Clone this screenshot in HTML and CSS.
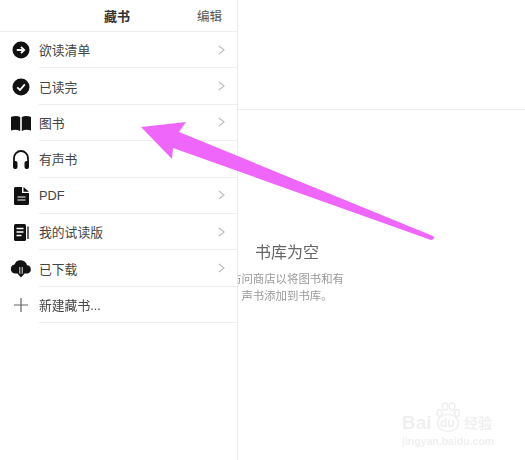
FILE: index.html
```html
<!DOCTYPE html>
<html>
<head>
  <meta charset="UTF-8">
  <title>藏书</title>
  <link rel="stylesheet" href="styles.css">
</head>
<body>
  <div class="app">
    <div class="sidebar">
      <div class="header">
        <h1>藏书</h1>
        <span class="edit">编辑</span>
      </div>
      <div class="row">
        <div class="row-icon">
          <svg width="18" height="18" viewBox="0 0 18 18"><circle cx="9" cy="9" r="8.5" fill="#111"/><path d="M4.8 9h7M9 5.8 12.2 9 9 12.2" fill="none" stroke="#fff" stroke-width="1.8"/></svg>
        </div>
        <div class="row-body"><span>欲读清单</span><svg class="chevron" width="7" height="10" viewBox="0 0 7 10"><path d="M1 1l5 4-5 4" fill="none" stroke="#bbb" stroke-width="1.1"/></svg></div>
      </div>
      <div class="row">
        <div class="row-icon">
          <svg width="18" height="18" viewBox="0 0 18 18"><circle cx="9" cy="9" r="8.5" fill="#111"/><path d="M5.2 9.3 8 12l4.8-5.6" fill="none" stroke="#fff" stroke-width="1.8"/></svg>
        </div>
        <div class="row-body"><span>已读完</span><svg class="chevron" width="7" height="10" viewBox="0 0 7 10"><path d="M1 1l5 4-5 4" fill="none" stroke="#bbb" stroke-width="1.1"/></svg></div>
      </div>
      <div class="row">
        <div class="row-icon">
          <svg width="20" height="16" viewBox="0 0 20 16"><path d="M0 2Q5 0 9.2 2V16Q5 14 0 15.5ZM10.8 2Q15 0 20 2V15.5Q15 14 10.8 16Z" fill="#111"/></svg>
        </div>
        <div class="row-body"><span>图书</span><svg class="chevron" width="7" height="10" viewBox="0 0 7 10"><path d="M1 1l5 4-5 4" fill="none" stroke="#bbb" stroke-width="1.1"/></svg></div>
      </div>
      <div class="row">
        <div class="row-icon">
          <svg width="18" height="20" viewBox="0 0 18 20"><path d="M2 14V9a7 7 0 0 1 14 0v5" fill="none" stroke="#111" stroke-width="1.8"/><rect x="1" y="12" width="4.500" height="8" rx="2" fill="#111"/><rect x="12.500" y="12" width="4.500" height="8" rx="2" fill="#111"/></svg>
        </div>
        <div class="row-body"><span>有声书</span><svg class="chevron" width="7" height="10" viewBox="0 0 7 10"><path d="M1 1l5 4-5 4" fill="none" stroke="#bbb" stroke-width="1.1"/></svg></div>
      </div>
      <div class="row">
        <div class="row-icon">
          <svg width="15" height="18" viewBox="0 0 15 18"><path d="M1.500 0H8V6H15V16.500A1.500 1.500 0 0 1 13.500 18H1.500A1.500 1.500 0 0 1 0 16.500V1.500A1.500 1.500 0 0 1 1.500 0ZM9.500 0 15 4.700H9.500Z" fill="#111"/><path d="M3.500 10h8M3.500 13h8" stroke="#fff" stroke-width="1.200"/></svg>
        </div>
        <div class="row-body"><span>PDF</span><svg class="chevron" width="7" height="10" viewBox="0 0 7 10"><path d="M1 1l5 4-5 4" fill="none" stroke="#bbb" stroke-width="1.1"/></svg></div>
      </div>
      <div class="row">
        <div class="row-icon">
          <svg width="15" height="17" viewBox="0 0 15 17"><rect x="0" y="0" width="12" height="17" rx="1.500" fill="#111"/><path d="M2.500 4.500h7M2.500 8h7M2.500 11.500h5" stroke="#fff" stroke-width="1.300"/><path d="M14 2.500v12.500" stroke="#333" stroke-width="1.500"/></svg>
        </div>
        <div class="row-body"><span>我的试读版</span><svg class="chevron" width="7" height="10" viewBox="0 0 7 10"><path d="M1 1l5 4-5 4" fill="none" stroke="#bbb" stroke-width="1.1"/></svg></div>
      </div>
      <div class="row">
        <div class="row-icon">
          <svg width="22" height="18" viewBox="0 0 22 18"><path d="M5 13.500A4.500 4.500 0 0 1 4.500 4.600 6.500 6.500 0 0 1 17 5.200 4.200 4.200 0 0 1 17.500 13.500Z" fill="#111"/><path d="M11 7v9" stroke="#fff" stroke-width="3.200"/><path d="M11 7v9M8 13l3 3.300 3-3.300" fill="none" stroke="#111" stroke-width="1.500"/></svg>
        </div>
        <div class="row-body"><span>已下载</span><svg class="chevron" width="7" height="10" viewBox="0 0 7 10"><path d="M1 1l5 4-5 4" fill="none" stroke="#bbb" stroke-width="1.1"/></svg></div>
      </div>
      <div class="row">
        <div class="row-icon">
          <svg width="14" height="14" viewBox="0 0 14 14"><path d="M7 0v14M0 7h14" stroke="#666" stroke-width="1.200"/></svg>
        </div>
        <div class="row-body"><span>新建藏书...</span></div>
      </div>
    </div>
    <div class="pane">
      <div class="pane-top"></div>
      <div class="empty">
        <h2>书库为空</h2>
        <p>访问商店以将图书和有<br>声书添加到书库。</p>
      </div>
    </div>
  </div>

  <svg class="arrow" width="525" height="460" viewBox="0 0 525 460"><path d="M141 127 186 122 179 132 433 236Q436 239 431 240L173 148 172 159Z" fill="#ee66fa"/></svg>

  <div class="watermark">
    <div class="wm-top">
      <span class="wm-bai">Bai</span>
      <div class="wm-paw">
        <svg width="24" height="31" viewBox="0 0 24 31"><g fill="none" stroke="#efefef" stroke-width="1.500"><ellipse cx="3.500" cy="11" rx="2.500" ry="3.500"/><ellipse cx="9" cy="4.500" rx="2.800" ry="3.500"/><ellipse cx="16" cy="4.500" rx="2.800" ry="3.500"/><ellipse cx="21" cy="11" rx="2.500" ry="3.500"/><ellipse cx="12" cy="21" rx="10.500" ry="8.500"/></g></svg>
        <span class="wm-du">du</span>
      </div>
      <span class="wm-jy">经验</span>
    </div>
    <div class="wm-url">jingyan.baidu.com</div>
  </div>
</body>
</html>
```

FILE: styles.css
```css
body {
  margin: 0;
  width: 525px;
  height: 460px;
  overflow: hidden;
  background: #fff;
  color: #333;
  font-family: 'Liberation Sans', 'Noto Sans CJK SC', sans-serif;
}

.app {
  display: flex;
  height: 460px;
  filter: blur(0.7px);
}

.sidebar {
  width: 237px;
  flex-shrink: 0;
  border-right: 1px solid #eaeaea;
  background: #fff;
}

.header {
  display: flex;
  align-items: center;
  justify-content: space-between;
  height: 32px;
  padding: 0 15px 0 104px;
  box-sizing: border-box;
  border-bottom: 1px solid #eee;
}

.header h1 {
  margin: 0;
  font-size: 13px;
  font-weight: 700;
  color: #333;
}

.edit {
  font-size: 12.5px;
  color: #555;
}

.row {
  display: flex;
  height: 36.4px;
}

.row-icon {
  width: 39px;
  flex-shrink: 0;
  display: flex;
  align-items: center;
  justify-content: center;
  padding-left: 3px;
  box-sizing: border-box;
}

.row-body {
  flex: 1;
  display: flex;
  align-items: center;
  justify-content: space-between;
  padding-right: 12px;
  border-bottom: 1px solid #eee;
  font-size: 12.8px;
  color: #444;
}

.pane {
  flex: 1;
  min-width: 0;
  overflow: hidden;
}

.pane-top {
  height: 109px;
  border-bottom: 1px solid #eee;
}

.empty {
  width: 114px;
  margin: 132px 0 0 -8px;
  text-align: center;
}

.empty h2 {
  margin: 0;
  font-size: 16px;
  font-weight: 400;
  line-height: 22px;
  color: #666;
}

.empty p {
  margin: 7px 0 0;
  font-size: 11.4px;
  line-height: 17px;
  color: #999;
}

.arrow {
  position: absolute;
  left: 0;
  top: 0;
  filter: blur(0.4px);
}

.watermark {
  position: absolute;
  left: 402px;
  top: 402px;
  width: 96px;
  color: #efefef;
  filter: blur(0.5px);
}

.wm-top {
  display: flex;
  align-items: flex-end;
  height: 31px;
}

.wm-bai {
  width: 34px;
  font-size: 19px;
  font-weight: 700;
  line-height: 20px;
}

.wm-paw {
  position: relative;
  width: 28px;
  height: 31px;
}

.wm-du {
  position: absolute;
  left: 4px;
  top: 14px;
  font-size: 12px;
  font-weight: 700;
}

.wm-jy {
  font-size: 14px;
  font-weight: 700;
  line-height: 20px;
}

.wm-url {
  margin-top: 2px;
  font-size: 10.5px;
  font-weight: 700;
  line-height: 13px;
  white-space: nowrap;
}
```
